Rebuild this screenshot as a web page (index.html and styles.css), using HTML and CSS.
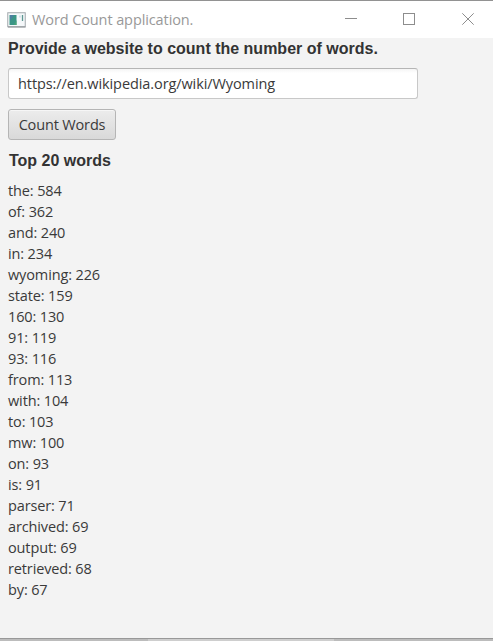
FILE: index.html
```html
<!DOCTYPE html>
<html lang="en">
<head>
<meta charset="utf-8">
<title>Word Count application.</title>
<link rel="stylesheet" href="styles.css">
</head>
<body>
<div class="window">
  <header class="titlebar">
    <svg class="app-icon" width="19" height="16" viewBox="0 0 19 16">
      <rect x=".75" y=".75" width="17.5" height="14" fill="#f5f8fa" stroke="#a3a9ad"/>
      <path d="M1 15h17.5" stroke="#8c9195"/>
      <rect x="2.5" y="3" width="7" height="10" fill="#3b9586"/>
      <path d="M3 3h4L3 9z" fill="#4c7fa0"/>
      <path d="M7 13l2.5-5v5z" fill="#48a477"/>
      <path d="M12 3.5h2v2h-2z" fill="#d5e2ea"/>
      <path d="M15.5 3v6" stroke="#5d9792" stroke-width="1.3"/>
    </svg>
    <h1 class="title">Word Count application.</h1>
    <svg class="controls" width="131" height="14" viewBox="0 0 131 14" fill="none" stroke="#8d8d8d">
      <path d="M0 5.5h12"/>
      <rect x="58.5" y=".5" width="11" height="11"/>
      <path d="M117.3 .3l11.4 11.4M128.7 .3l-11.4 11.4"/>
    </svg>
  </header>
  <main class="content">
    <h2 class="heading">Provide a website to count the number of words.</h2>
    <input class="url" type="text" value="https://en.wikipedia.org/wiki/Wyoming">
    <button class="count">Count Words</button>
    <h2 class="heading results-heading">Top 20 words</h2>
    <ul class="words">
      <li>the: 584</li>
      <li>of: 362</li>
      <li>and: 240</li>
      <li>in: 234</li>
      <li>wyoming: 226</li>
      <li>state: 159</li>
      <li>160: 130</li>
      <li>91: 119</li>
      <li>93: 116</li>
      <li>from: 113</li>
      <li>with: 104</li>
      <li>to: 103</li>
      <li>mw: 100</li>
      <li>on: 93</li>
      <li>is: 91</li>
      <li>parser: 71</li>
      <li>archived: 69</li>
      <li>output: 69</li>
      <li>retrieved: 68</li>
      <li>by: 67</li>
    </ul>
  </main>
  <footer class="edge"></footer>
</div>
</body>
</html>
```

FILE: styles.css
```css
* { box-sizing: border-box; }
body {
  margin: 0;
  background: #f3f3f3;
  color: #3a3a3a;
  font: 14.5px "Open Sans", sans-serif;
  letter-spacing: -0.13px;
}
.window {
  display: flex;
  flex-direction: column;
  height: 641px;
  overflow: hidden;
}
.titlebar {
  display: flex;
  align-items: center;
  flex: none;
  height: 38px;
  padding: 1px 17px 0 7px;
  background: #fff;
  border-top: 1px solid #929292;
}
.title {
  margin: 0 auto 0 6px;
  color: #999;
  font-size: 14.5px;
  font-weight: 400;
  line-height: 20px;
  letter-spacing: -0.1px;
}
.content {
  display: flex;
  flex-direction: column;
  align-items: flex-start;
  flex: 1;
  padding: 1px 8px 0;
}
.heading {
  margin: 0;
  font: bold 16px/20px "Liberation Sans", Arial, sans-serif;
  letter-spacing: 0;
  color: #333;
}
.url {
  width: 410px;
  height: 31px;
  margin: 9px 0 10px;
  padding: 0 9px;
  border: 1px solid #c8c8c8;
  border-top-color: #b5b5b5;
  border-radius: 3px;
  background: linear-gradient(#f5f5f5, #fff 4px);
  color: #3a3a3a;
  font: inherit;
  letter-spacing: -0.09px;
  outline: 0;
}
.count {
  width: 108px;
  height: 31px;
  padding: 0;
  border: 1px solid #b5b5b5;
  border-radius: 3px;
  background: linear-gradient(#ececec, #d9d9d9);
  box-shadow: inset 0 1px #f6f6f6;
  color: #3a3a3a;
  font: inherit;
  letter-spacing: -0.15px;
}
.results-heading { margin: 11px 0 9px 1px; }
.words {
  margin: 0;
  padding: 0;
  list-style: none;
  line-height: 21px;
}
.edge {
  flex: none;
  height: 3px;
  border-top: 1px solid #989898;
  background: linear-gradient(90deg, #bcbcbc 148px, #cecece 148px 334px, #bcbcbc 334px);
}
```
